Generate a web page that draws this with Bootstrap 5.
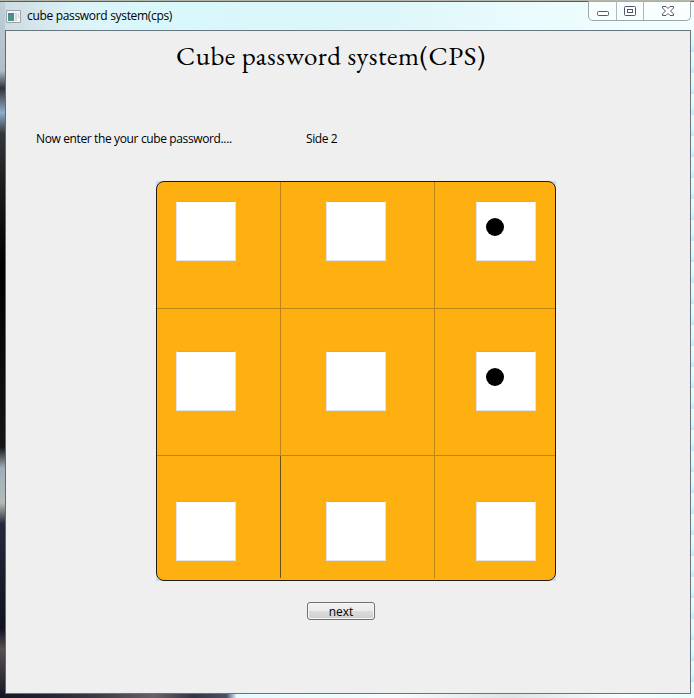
<!DOCTYPE html>
<html lang="en">
<head>
<meta charset="utf-8">
<meta name="viewport" content="width=device-width, initial-scale=1">
<title>cube password system(cps)</title>
<link href="https://cdn.jsdelivr.net/npm/bootstrap@5.3.0/dist/css/bootstrap.min.css" rel="stylesheet">
<style>
body{font-family:"Open Sans","Noto Sans",sans-serif;font-size:12px;line-height:16px;color:#000}
.window{width:694px;height:698px;border-top:1px solid #b5b5a9;padding:0 3px 4px 5px;
 background:
 linear-gradient(#555b5e,#555b5e) 0 0/100% 1px no-repeat,
 linear-gradient(90deg,#171824,#22232e 18%,#3a3944 40%,#6a5f68 65%,#333644 82%,#4b5266 96%,#dcecff) 0 100%/236px 5px no-repeat,
 linear-gradient(90deg,#e4fbff,#f5fdff 35%,#dce6e6 60%,#f5ffff 85%,#e5ffff) 100% 100%/458px 5px no-repeat,
 linear-gradient(#c0d0d8 0,#b0bec6 10%,#303138 12.5%,#8faccc 16%,#34363b 19%,#202020 25%,#000 38%,#151515 64%,#a0aeba 67%,#b4bcb8 72%,#25283a 75%,#11121f 90%,#575052 93%,#151622 100%) 0 0/5px 100% no-repeat,
 repeating-linear-gradient(#e9fcfc 0,#d9fafb 13px,#c5e7f8 21px) 100% 30px/3px 100% no-repeat,
 linear-gradient(90deg,#cddbe1,#dcf4f8 12%,#d8f8fb 25%,#ddf6f9 55%,#e9fbfd 75%,#f3ffff)}
.titlebar{height:29px;padding-left:1px}
.app-icon{margin-top:9px;width:15px;height:13px}
.caption-text{margin:7px 0 0 6px;letter-spacing:-.32px}
.controls{width:103px;height:20px;border:1px solid #9da5a9;border-top:0;border-radius:0 0 5px 5px;background:rgba(255,255,255,.5)}
.client{width:686px;height:664px;background:#efefef;border:1px solid #66757d;border-left-color:#626a70}
.heading{font:400 27px/32px "EB Garamond",Garamond,"Liberation Serif",serif;margin:9px 0 0 170px;width:320px;white-space:nowrap;letter-spacing:.52px}
.prompt{margin-top:59px;padding-left:30px}
.prompt-label{width:270px;letter-spacing:-.37px}
.side-label{letter-spacing:-.4px}
.board-frame{width:400px;height:400px;margin:34px 0 0 150px;background:#c6ddf8}
.board{width:400px;height:400px;display:grid;grid-template-columns:124px 154px 120px;grid-template-rows:127px 147px 124px;background:#fdb010;border:1px solid #211b10;border-radius:8px;overflow:hidden}
.cell{border-right:1px solid #be8414;border-bottom:1px solid #be8414}
.cell:nth-child(3n){border-right:0;padding-left:41px}
.cell:nth-child(3n+1){padding-left:19px}
.cell:nth-child(3n+2){padding-left:45px}
.cell:nth-child(-n+3){padding-top:19px}
.cell:nth-child(n+4){padding-top:42px}
.cell:nth-child(n+7){padding-top:45px;border-bottom:0;margin-bottom:2px}
.cell:nth-child(7){border-right-color:#6b5017}
.face{width:60px;height:60px;background:#fff;border:1px solid #e2e3ea;border-top-color:#abadb3;padding:16px 0 0 9px}
.dot{width:18px;height:18px;background:#000}
.next-btn{width:68px;height:18px;margin:21px 0 0 301px;padding:0;font-size:12px;line-height:17px;color:#000;border:1px solid #707070;border-radius:3px;background:linear-gradient(#f2f2f2,#ebebeb 48%,#dcdcdc 50%,#cfcfcf);box-shadow:inset 0 0 0 1px #f8f8f8}
</style>
</head>
<body class="m-0 overflow-hidden">
<main class="window">
 <header class="titlebar d-flex align-items-start">
  <svg class="app-icon" viewBox="0 0 15 13"><defs><linearGradient id="g" x2="0" y2="1"><stop stop-color="#4b83a8"/><stop offset="1" stop-color="#4b9b72"/></linearGradient></defs><path d="M.5.5h14v12H.5z" fill="#f5f5f5" stroke="#9ca4aa"/><path d="M2 3h6v8H2z" fill="url(#g)"/><path d="M9 3h2v8H9zM12 3h1v5h-1z" fill="#d5d8d9"/></svg>
  <span class="caption-text">cube password system(cps)</span>
  <div class="controls ms-auto">
   <svg class="d-block" width="101" height="19" viewBox="0 0 101 19"><path d="M27.500 0v19M54.500 0v19" stroke="#aeb8bc"/><g fill="#fff" stroke="#52566a"><rect x="8.500" y="10.500" width="11" height="4" rx="1"/><rect x="35.500" y="5.500" width="11" height="9" rx="1"/><rect x="38.500" y="8.500" width="5" height="3"/><path d="M73.500 5.500h3.500l2 2 2-2h3.500v1.500l-3 3 3 3v1.500H81l-2-2-2 2h-3.500V13l3-3-3-3z"/></g></svg>
  </div>
 </header>
 <section class="client">
  <h1 class="heading">Cube password system(CPS)</h1>
  <div class="prompt d-flex"><span class="prompt-label">Now enter the your cube password....</span><span class="side-label">Side 2</span></div>
  <div class="board-frame"><div class="board">
   <div class="cell"><div class="face"></div></div>
   <div class="cell"><div class="face"></div></div>
   <div class="cell"><div class="face"><div class="dot rounded-circle"></div></div></div>
   <div class="cell"><div class="face"></div></div>
   <div class="cell"><div class="face"></div></div>
   <div class="cell"><div class="face"><div class="dot rounded-circle"></div></div></div>
   <div class="cell"><div class="face"></div></div>
   <div class="cell"><div class="face"></div></div>
   <div class="cell"><div class="face"></div></div>
  </div></div>
  <button type="button" class="next-btn btn d-block">next</button>
 </section>
</main>
<script src="https://cdn.jsdelivr.net/npm/bootstrap@5.3.0/dist/js/bootstrap.bundle.min.js"></script>
</body>
</html>
